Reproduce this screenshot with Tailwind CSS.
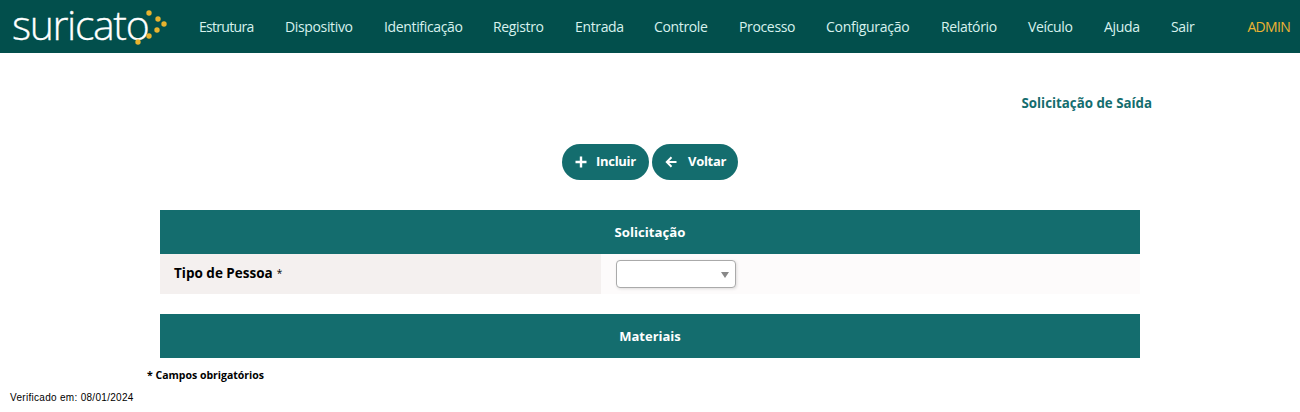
<!DOCTYPE html>
<html lang="pt-BR">
<head>
<meta charset="utf-8">
<title>Solicitação de Saída</title>
<script src="https://cdn.jsdelivr.net/npm/@tailwindcss/browser@4"></script>
</head>
<body class="bg-white font-['Open_Sans',sans-serif] h-[412px] overflow-hidden">
<header class="h-[53px] bg-[#024f4c] flex items-center relative">
  <div class="w-[199px] shrink-0 flex items-start pl-[12px] pt-[1px] relative h-full">
    <span class="text-[41px] leading-[46px] font-light text-white tracking-[-1.4px] [-webkit-text-stroke:0.3px_white]">suricato</span>
    <svg class="absolute left-0 top-0" width="199" height="53" viewBox="0 0 199 53">
      <circle cx="149" cy="13" r="2.7" fill="#e8b32e"/><circle cx="158" cy="19" r="2.7" fill="#e8b32e"/><circle cx="164" cy="24" r="2.7" fill="#e8b32e"/><circle cx="157" cy="30" r="2.7" fill="#e8b32e"/><circle cx="149" cy="36" r="2.7" fill="#e8b32e"/><circle cx="138" cy="42" r="2.7" fill="#e8b32e"/>
    </svg>
  </div>
  <nav class="flex gap-[31px] text-[14px] text-[#d8f2ee] tracking-[-0.35px] whitespace-nowrap">
    <a class="w-[55px] tracking-[-0.7px]">Estrutura</a><a class="w-[68px]">Dispositivo</a><a class="w-[78px]">Identificação</a><a class="w-[51px]">Registro</a><a class="w-[48px]">Entrada</a><a class="w-[54px]">Controle</a><a class="w-[56px]">Processo</a><a class="w-[84px] tracking-[-0.28px]">Configuração</a><a class="w-[56px]">Relatório</a><a class="w-[45px]">Veículo</a><a class="w-[36px]">Ajuda</a><a class="w-[22px]">Sair</a>
  </nav>
  <span class="ml-auto pr-[10px] text-[14px] text-[#edb432] tracking-[-0.7px]">ADMIN</span>
</header>
<main class="w-[980px] ml-[160px]">
  <div class="h-[91px] flex items-center justify-end">
    <h1 class="text-[13.3px] font-bold text-[#146d6e] mr-[-12px] mt-[10px]">Solicitação de Saída</h1>
  </div>
  <div class="flex justify-center gap-[3px] h-[66px]">
    <button class="h-[36px] w-[87px] rounded-full bg-[#146d6e] text-white text-[13px] font-bold flex items-center pl-[13px] gap-[9px] tracking-[-0.3px]">
      <svg width="12" height="12" viewBox="0 0 12 12"><path d="M6 .5v11M.5 6h11" stroke="#fff" stroke-width="2.4" fill="none"/></svg>Incluir
    </button>
    <button class="h-[36px] w-[86px] rounded-full bg-[#146d6e] text-white text-[13px] font-bold flex items-center pl-[13px] gap-[11px] tracking-[-0.3px]">
      <svg width="12" height="12" viewBox="0 0 12 12"><path d="M11.5 6H2M6.5 1.3 1.8 6l4.7 4.7" stroke="#fff" stroke-width="2" fill="none"/></svg>Voltar
    </button>
  </div>
  <div class="h-[44px] pt-[1px] bg-[#146d6e] text-white text-[13.2px] font-bold flex items-center justify-center">Solicitação</div>
  <div class="h-[40px] flex">
    <div class="w-[441px] pb-[1px] bg-[#f4f0ef] flex items-center pl-[14px] text-[13.5px] font-bold text-black">Tipo de Pessoa<span class="font-normal ml-[4px] text-[10px]">*</span></div>
    <div class="flex-1 bg-[#fdfbfb] flex items-center pl-[15px]">
      <div class="w-[120px] h-[28px] bg-white border border-[#aaa] rounded-[4px] shadow-[1px_1px_3px_rgba(0,0,0,0.12)] flex items-center justify-end pr-[6px]">
        <span class="w-0 h-0 border-l-[4px] border-r-[4px] border-t-[6px] border-l-transparent border-r-transparent border-t-[#888] mt-[2px]"></span>
      </div>
    </div>
  </div>
  <div class="h-[44px] mt-[20px] pt-[1px] bg-[#146d6e] text-white text-[13px] font-bold flex items-center justify-center">Materiais</div>
</main>
<p class="ml-[147px] mt-[10px] text-[10.5px] leading-[14px] font-bold text-black">* Campos obrigatórios</p>
<p class="ml-[10px] mt-[10px] text-[10px] leading-[12px] font-['Liberation_Sans',sans-serif] text-black tracking-[0.3px]">Verificado em: 08/01/2024</p>
</body>
</html>
